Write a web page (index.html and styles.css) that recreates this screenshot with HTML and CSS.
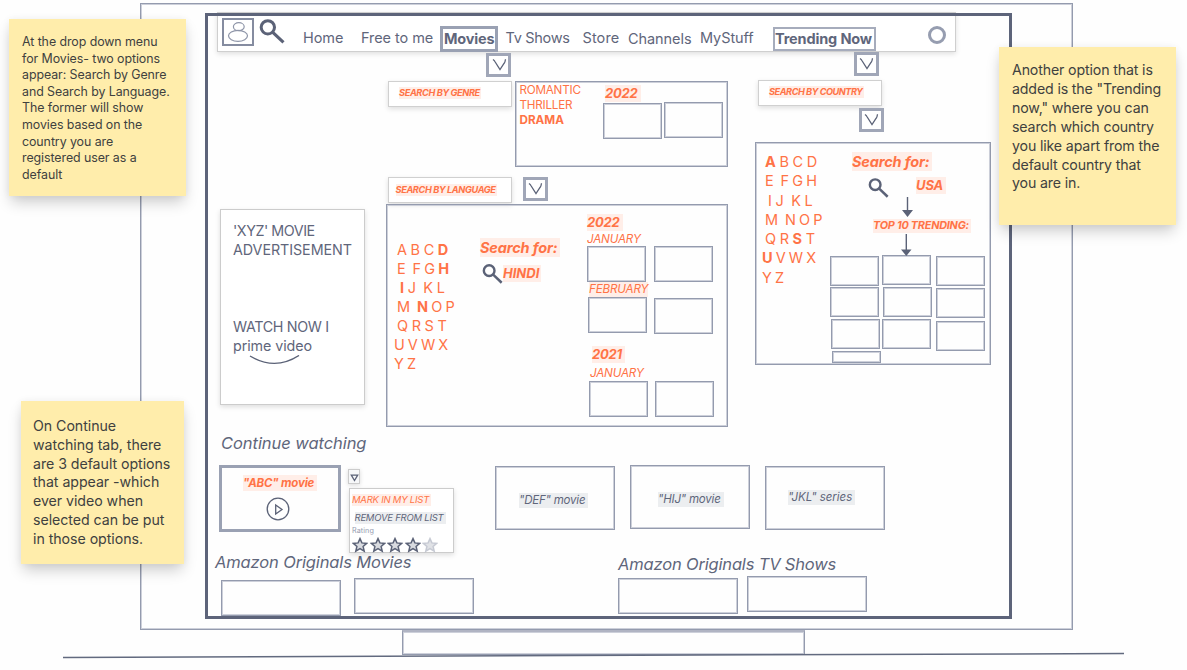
FILE: index.html
```
<!DOCTYPE html>
<html lang="en">
<head>
<meta charset="utf-8">
<title>Streaming wireframe</title>
<link rel="stylesheet" href="styles.css">
</head>
<body>
<svg class="defs" width="0" height="0">
  <symbol id="search" viewBox="0 0 24 24"><circle cx="8" cy="8" r="6.4" fill="none" stroke="#5b6277" stroke-width="2.9"/><path d="M12.5 12.5 23 22.5" fill="none" stroke="#5b6277" stroke-width="3"/></symbol>
  <symbol id="chev" viewBox="0 0 16 14"><path d="M1 1.5Q2.5 2.6 3.2 4L8 11.5 12 5.5Q13.2 4 13.5 1.2" fill="none" stroke="#5b6277" stroke-width="1.3"/></symbol>
  <symbol id="star" viewBox="0 0 16 16"><path d="M8 1.6 9.9 5.9 14.7 6.4 11.1 9.5 12.2 14.2 8 11.7 3.8 14.2 4.9 9.5 1.3 6.4 6.1 5.9Z" fill="#d9dbe0" stroke="currentColor" stroke-width="1.5"/></symbol>
</svg>
<main class="board">
  <section class="box laptop"></section>
  <section class="box base"></section>
  <svg class="ground" width="1064" height="8"><path d="M0 5.4 1061 1.5" stroke="#626a7f" stroke-width="1.5"/></svg>

  <header class="topbar">
    <span class="avatar"><svg width="28" height="24" viewBox="0 0 28 24" fill="none" stroke="#8e95a8" stroke-width="1.2"><ellipse cx="14.8" cy="6.7" rx="5.4" ry="4"/><ellipse cx="14" cy="15.8" rx="9.5" ry="5.5"/></svg></span>
    <svg class="top-search" width="26" height="25"><use href="#search"/></svg>
    <span class="link">Home</span>
    <span class="link">Free to me</span>
    <span class="link movies">Movies</span>
    <span class="link tv">Tv Shows</span>
    <span class="link store">Store</span>
    <span class="link channels">Channels</span>
    <span class="link">MyStuff</span>
    <span class="link trending">Trending Now</span>
    <span class="ring"></span>
  </header>
  <section class="screen"></section>

  <span class="drop d1"><svg width="16" height="14"><use href="#chev"/></svg></span>
  <div class="label l1"><mark>SEARCH BY GENRE</mark></div>
  <div class="label l2"><mark>SEARCH BY LANGUAGE</mark></div>
  <span class="drop d2"><svg width="16" height="14"><use href="#chev"/></svg></span>
  <span class="drop d3"><svg width="16" height="14"><use href="#chev"/></svg></span>
  <div class="label l3"><mark>SEARCH BY COUNTRY</mark></div>
  <span class="drop d4"><svg width="16" height="14"><use href="#chev"/></svg></span>

  <section class="box genre"><p>ROMANTIC</p><p>THRILLER</p><p class="strong">DRAMA</p></section>
  <mark class="year y1">2022</mark>
  <i class="box thumb g1"></i><i class="box thumb g2"></i>

  <article class="ad">
    <p>'XYZ' MOVIE<br><span class="wide">ADVERTISEMENT</span></p>
    <p class="watch"><span class="now">WATCH NOW I</span><br>prime video</p>
    <svg width="52" height="11" viewBox="0 0 52 11"><path d="M1 1Q26 16 50 .5" fill="none" stroke="#5b6277" stroke-width="1.4"/></svg>
  </article>

  <section class="box language">
    <div class="letters">
      <p>A B C <b>D</b></p><p class="e">E&nbsp; F G <b>H</b></p><p class="i"><b>I</b> J&nbsp; K L</p><p class="m">M&nbsp; <b>N</b> O P</p><p>Q R S T</p><p class="u">U V W X</p><p class="u">Y Z</p>
    </div>
  </section>
  <mark class="find f1">Search for:</mark>
  <svg class="s1" width="21" height="20"><use href="#search"/></svg>
  <mark class="year hindi">HINDI</mark>
  <mark class="year y2">2022</mark>
  <span class="month m1">JANUARY</span>
  <i class="box thumb a1"></i><i class="box thumb a2"></i>
  <mark class="month m2">FEBRUARY</mark>
  <i class="box thumb a3"></i><i class="box thumb a4"></i>
  <mark class="year y3">2021</mark>
  <span class="month m3">JANUARY</span>
  <i class="box thumb a5"></i><i class="box thumb a6"></i>

  <section class="box country">
    <div class="letters">
      <p><b>A</b> B C D</p><p class="e">E&nbsp; F G H</p><p class="i">I J&nbsp; K L</p><p class="m">M&nbsp; N O P</p><p>Q R <b>S</b> T</p><p class="u"><b>U</b> V W X</p><p class="u">Y Z</p>
    </div>
  </section>
  <mark class="find f2">Search for:</mark>
  <svg class="s2" width="21" height="20"><use href="#search"/></svg>
  <mark class="year usa">USA</mark>
  <mark class="top10">TOP 10 TRENDING:</mark>
  <i class="box tile t1"></i><i class="box tile t2"></i><i class="box tile t3"></i>
  <i class="box tile t4"></i><i class="box tile t5"></i><i class="box tile t6"></i>
  <i class="box tile t7"></i><i class="box tile t8"></i><i class="box tile t9"></i>
  <i class="box tile t10"></i>
  <svg class="arrows" width="14" height="62" viewBox="0 0 14 62" fill="#5b6277" stroke="#5b6277"><path d="M7.5 1V16M6.3 38V55" stroke-width="1.4"/><path d="M2 14H13L7.5 21ZM1 53.5H11.5L6.3 60Z" stroke="none"/></svg>

  <h2 class="h-continue">Continue watching</h2>
  <article class="abc"><mark>"ABC" movie</mark><svg width="24" height="24" viewBox="0 0 24 24" fill="none" stroke="#5b6277" stroke-width="1.3"><circle cx="12" cy="12" r="10.8"/><path d="M9.7 8V17L16 12.5Z"/></svg></article>
  <h2 class="h-movies">Amazon Originals Movies</h2>
  <span class="mini"><svg width="9" height="8"><path d="M1.3 1.2H7.7L4.5 6.5Z" fill="none" stroke="#5b6277" stroke-width="1.3"/></svg></span>
  <aside class="menu">
    <mark>MARK IN MY LIST</mark>
    <mark class="gray">REMOVE FROM LIST</mark>
    <small>Rating</small>
    <div class="stars"><svg><use href="#star"/></svg><svg><use href="#star"/></svg><svg><use href="#star"/></svg><svg><use href="#star"/></svg><svg class="off"><use href="#star"/></svg></div>
  </aside>
  <article class="box show def"><mark class="gray">"DEF" movie</mark></article>
  <article class="box show hij"><mark class="gray">"HIJ" movie</mark></article>
  <article class="box show jkl"><mark class="gray">"JKL" series</mark></article>

  <h2 class="h-tv">Amazon Originals TV Shows</h2>
  <i class="box orig o1"></i><i class="box orig o2"></i><i class="box orig o3"></i><i class="box orig o4"></i>

  <aside class="note n1">At the drop down menu<br>for Movies- two options<br>appear: Search by Genre<br>and Search by Language.<br>The former will show<br>movies based on the<br>country you are<br>registered user as a<br>default</aside>
  <aside class="note n2">Another option that is<br>added is the "Trending<br>now," where you can<br>search which country<br>you like apart from the<br>default country that<br>you are in.</aside>
  <aside class="note n3">On Continue<br>watching tab, there<br>are 3 default options<br>that appear -which<br>ever video when<br>selected can be put<br>in those options.</aside>
</main>
</body>
</html>
```
FILE: styles.css
```
* { box-sizing: border-box; }
body { margin: 0; background: #fff; font-family: Inter, "Liberation Sans", sans-serif; color: #5f667b; }
p, h2 { margin: 0; }
svg { display: block; }
mark { background: #ffeee8; color: #ff7346; white-space: nowrap; }
mark.gray { background: #eceef0; color: #5f667b; }

/* Whiteboard: each sketched shape is a free-standing node */
.defs { position: absolute; }
.board { position: relative; width: 1187px; height: 670px; overflow: hidden; background: #fefefe; }
.board > * { position: absolute; }
.box { border: 1px solid #949bae; box-shadow: inset 0 0 0 1px #cdd0da; }

.laptop { left: 140px; top: 3px; width: 933px; height: 627px; }
.base { left: 402px; top: 630px; width: 403px; height: 25px; border-top: 2px solid #b0b4c3; }
.ground { left: 63px; top: 652px; }
.screen { left: 205px; top: 13px; width: 807px; height: 606px; border: 3px solid #5d647a; }

/* Top navigation */
.topbar {
  left: 217px; top: 12px; width: 739px; height: 40px; padding-left: 4px;
  display: grid; grid-template-columns: 37px 44px 58px 79px 65px 77px 46px 72px 73px 155px 20px; align-items: start;
  background: #fff; border: 1px solid #cfcfcf; box-shadow: 0 2px 5px rgba(0,0,0,.12);
}
.avatar { width: 32px; height: 28px; margin-top: 5px; border: 2px solid #858ca0; }
.top-search { margin-top: 6px; }
.link { margin-top: 15px; font-size: 14.5px; line-height: 20px; letter-spacing: -.07px; white-space: nowrap; }
.link.movies { width: 58px; height: 26px; margin-top: 13px; border: 3px solid #9aa1b3; padding-left: 1px; line-height: 20px; font-weight: 700; letter-spacing: -.2px; }
.link.trending { width: 103px; height: 24px; margin-top: 14px; border: 2px solid #a6acbc; padding-left: 0; line-height: 20px; font-weight: 700; letter-spacing: -.15px; }
.link.tv { letter-spacing: -.31px; padding-left: .5px; }
.link.store { letter-spacing: .1px; padding-left: .5px; }
.link.channels { margin-top: 16px; }
.ring { width: 18px; height: 18px; margin-top: 13px; border: 3px solid #969db0; border-radius: 50%; }

.drop { width: 25px; height: 24px; border: 3px solid #a0a6b7; padding: 2px 0 0 2px; background: #fff; }
.d1 { left: 486px; top: 53px; }
.d1 svg { margin-left: 1px; }
.d2 { left: 523px; top: 177px; }
.d3 { left: 854px; top: 52px; }
.d4 { left: 859px; top: 108px; }

.label { width: 124px; height: 26px; border: 1px solid #d0d0d0; background: #fff; box-shadow: 0 2px 5px rgba(0,0,0,.13); font-size: 9.2px; font-weight: 700; font-style: italic; line-height: 12px; letter-spacing: -.38px; }
.label mark { display: block; width: max-content; padding-right: 1px; }
.l1 { left: 388px; top: 81px; padding: 5px 0 0 10px; }
.l2 { left: 388px; top: 177px; padding: 6px 0 0 6.5px; }
.l3 { left: 758px; top: 80px; padding: 5px 0 0 10px; letter-spacing: -.47px; }

/* Genre panel */
.genre { left: 515px; top: 81px; width: 213px; height: 86px; padding: 1px 3.5px; font-size: 11.7px; line-height: 15px; letter-spacing: -.24px; color: #ff7346; }
.strong { font-weight: 700; letter-spacing: 0; }
.year { font-size: 13px; line-height: 17px; height: 17px; font-weight: 700; font-style: italic; letter-spacing: -.21px; padding-right: 3px; }
.y1 { left: 605px; top: 85px; }
.thumb { width: 59px; height: 36px; }
.g1 { left: 603px; top: 103px; }
.g2 { left: 664px; top: 102px; }

/* Advertisement card */
.ad { left: 220px; top: 209px; width: 145px; height: 196px; padding: 11px 0 0 12px; border: 1px solid #ccc; background: #fff; box-shadow: 0 2px 5px rgba(0,0,0,.13); font-size: 14.3px; line-height: 19.2px; letter-spacing: -.08px; }
.ad p:first-child { letter-spacing: -.45px; }
.ad .wide { letter-spacing: -.06px; }
.now { letter-spacing: -.35px; }
.watch { margin-top: 57.5px; }
.ad svg { margin-left: 16px; }

/* Language panel */
.language { left: 386px; top: 204px; width: 342px; height: 223px; padding: 34.5px 0 0 10px; }
.letters { font-size: 14.5px; line-height: 19px; letter-spacing: -.25px; color: #ff7346; white-space: nowrap; }
.letters .e, .letters .m { letter-spacing: -.45px; }
.letters .i { padding-left: 3px; }
.letters .u { margin-left: -3px; letter-spacing: -.5px; }
.find { font-size: 14.5px; line-height: 19px; height: 19px; font-weight: 700; font-style: italic; letter-spacing: -.15px; padding-right: 3px; }
.f1 { left: 480px; top: 238px; }
.s1 { left: 482px; top: 264px; }
.hindi { left: 503px; top: 265px; letter-spacing: 0; padding-right: 2px; }
.y2 { left: 587px; top: 214px; }
.y3 { left: 592px; top: 346px; }
.month { font-size: 11.7px; line-height: 15px; font-style: italic; letter-spacing: -.2px; color: #ff7346; white-space: nowrap; }
.m1 { left: 587px; top: 232px; }
.m2 { left: 589px; top: 282px; }
.m3 { left: 590px; top: 366px; }
.a1 { left: 587px; top: 246px; }
.a2 { left: 654px; top: 246px; }
.a3 { left: 588px; top: 297px; }
.a4 { left: 654px; top: 298px; }
.a5 { left: 589px; top: 381px; }
.a6 { left: 655px; top: 381px; }

/* Country panel */
.country { left: 755px; top: 142px; width: 236px; height: 223px; padding: 9px 0 0 9px; }
.country .letters { line-height: 19.3px; }
.f2 { left: 852px; top: 152px; }
.s2 { left: 868px; top: 178px; }
.usa { left: 916px; top: 177px; letter-spacing: -.1px; }
.top10 { left: 873px; top: 219px; font-size: 10.8px; line-height: 14px; font-weight: 700; font-style: italic; letter-spacing: -.2px; padding-right: 2px; }
.arrows { left: 900px; top: 196px; }
.tile { width: 49px; height: 30px; }
.t1 { left: 830px; top: 256px; }
.t2 { left: 882px; top: 255px; }
.t3 { left: 936px; top: 256px; }
.t4 { left: 830px; top: 287px; }
.t5 { left: 883px; top: 287px; }
.t6 { left: 936px; top: 288px; }
.t7 { left: 831px; top: 319px; }
.t8 { left: 882px; top: 319px; }
.t9 { left: 936px; top: 321px; }
.t10 { left: 832px; top: 351px; height: 12px; }

/* Rows of titles */
h2 { font-size: 16.5px; line-height: 22px; font-weight: 400; font-style: italic; white-space: nowrap; }
.h-continue { left: 221px; top: 432px; letter-spacing: -.06px; }
.h-movies { left: 215px; top: 551px; letter-spacing: -.14px; }
.h-tv { left: 618px; top: 553px; letter-spacing: -.17px; }
.abc { left: 219px; top: 465px; width: 122px; height: 67px; border: 3px solid #9aa1b3; padding: 7px 0 0 21px; font-size: 11.5px; line-height: 16px; font-weight: 700; font-style: italic; letter-spacing: -.2px; }
.abc mark { display: block; width: max-content; padding-right: 3px; }
.abc svg { margin: 6px 0 0 23px; }
.show { width: 120px; height: 64px; font-size: 11.5px; line-height: 15px; font-style: italic; letter-spacing: -.2px; }
.show mark { display: block; width: max-content; padding-right: 3px; }
.def { left: 495px; top: 466px; padding: 26px 0 0 23px; }
.hij { left: 630px; top: 465px; padding: 26px 0 0 27px; }
.jkl { left: 765px; top: 466px; padding: 23px 0 0 22px; letter-spacing: -.02px; }
.orig { width: 120px; height: 36px; }
.o1 { left: 221px; top: 580px; }
.o2 { left: 354px; top: 578px; }
.o3 { left: 618px; top: 578px; }
.o4 { left: 747px; top: 576px; }

/* List menu */
.mini { left: 348px; top: 469px; width: 12px; height: 15px; border: 1px solid #ccc; padding: 4px 0 0 1px; background: #f7f8f9; box-shadow: 0 1px 4px rgba(0,0,0,.15); }
.menu { left: 349px; top: 488px; width: 105px; height: 65px; padding: 5px 0 0 2px; display: flex; flex-direction: column; align-items: flex-start; border: 1px solid #ccc; background: #fff; box-shadow: 0 2px 5px rgba(0,0,0,.13); font-size: 9.5px; line-height: 12px; font-style: italic; letter-spacing: -.23px; }
.menu mark { padding-right: 2px; }
.menu .gray { margin: 6px 0 0 2.5px; }
.menu small { margin: 3px 0 0; font-size: 7.2px; line-height: 8px; font-style: normal; letter-spacing: .1px; color: #959caf; }
.stars { display: flex; gap: 1.5px; margin: 1.5px 0 0; color: #5b6277; }
.stars svg { width: 16px; height: 16px; }
.stars .off { color: #b9bdc9; }
.off use { opacity: .8; }

/* Sticky notes */
.note { background: #ffedab; color: #40413f; white-space: nowrap; box-shadow: 0 8px 14px -2px rgba(0,0,0,.2), 0 0 8px rgba(0,0,0,.05); }
.n1 { left: 9px; top: 19px; width: 177px; height: 177px; padding: 15px 13px; font-size: 12.4px; line-height: 16.6px; letter-spacing: -.07px; }
.n2 { left: 999px; top: 47px; width: 177px; height: 178px; padding: 14px 13px; font-size: 14.2px; line-height: 18.9px; letter-spacing: -.15px; }
.n3 { left: 21px; top: 401px; width: 163px; height: 163px; padding: 16px 12px; font-size: 14.2px; line-height: 18.8px; letter-spacing: -.05px; }
```
